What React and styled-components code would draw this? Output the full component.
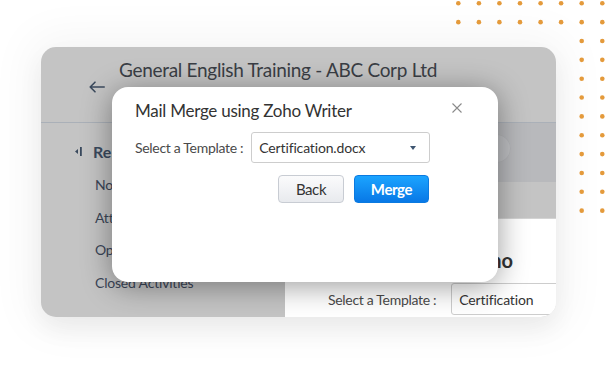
import React from 'react';
import styled, { createGlobalStyle } from 'styled-components';

const GlobalStyle = createGlobalStyle`
  html, body {
    margin: 0;
    padding: 0;
    background: #ffffff;
  }
  body {
    font-family: Lato, "Open Sans", "Liberation Sans", sans-serif;
  }
`;

const Stage = styled.div`
  position: relative;
  box-sizing: border-box;
  width: 606px;
  height: 369px;
  overflow: hidden;
  padding: 47px 0 0 41px;
  background: #ffffff;
`;

const Dots = styled.svg`
  position: absolute;
  top: 0;
  left: 456px;
`;

const Card = styled.div`
  position: relative;
  display: flex;
  flex-direction: column;
  width: 515px;
  height: 270px;
  border-radius: 15px;
  overflow: hidden;
  background: #c4c4c4;
  box-shadow:
    0 12px 24px rgba(0, 0, 0, 0.06),
    0 0 44px 14px rgba(0, 0, 0, 0.04);
`;

const Header = styled.div`
  display: flex;
  align-items: flex-start;
  gap: 14px;
  box-sizing: border-box;
  height: 76px;
  padding: 12px 0 0 48px;
  border-bottom: 1px solid #aab0b8;
`;

const BackArrow = styled.svg`
  margin-top: 22px;
  flex-shrink: 0;
`;

const PageTitle = styled.div`
  font-size: 19px;
  line-height: 22px;
  letter-spacing: -0.3px;
  color: #3a3e45;
`;

const Body = styled.div`
  display: flex;
  flex: 1;
  min-height: 0;
`;

const Sidebar = styled.div`
  display: flex;
  flex-direction: column;
  width: 244px;
  flex-shrink: 0;
  padding: 11px 0 0 34px;
  box-sizing: border-box;
`;

const SideHead = styled.div`
  display: flex;
  align-items: center;
  gap: 11px;
  height: 35px;
  font-size: 16px;
  font-weight: 700;
  color: #3a4a5e;
`;

const SideItem = styled.div`
  height: 32.5px;
  line-height: 32.5px;
  padding-left: 20px;
  font-size: 14px;
  letter-spacing: -0.2px;
  color: #3b4658;
  white-space: nowrap;
`;

const Main = styled.div`
  display: flex;
  flex-direction: column;
  flex: 1;
  min-width: 0;
`;

const Band = styled.div`
  display: flex;
  box-sizing: border-box;
  height: ${props => props.height}px;
  background: ${props => props.bg};
  padding-top: ${props => props.pad || 0}px;
`;

const Pill = styled.div`
  width: 220px;
  height: 29px;
  margin-left: auto;
  margin-right: 45px;
  border-radius: 15px;
  background: #bfc0c3;
  box-shadow: inset 0 0 0 1px #b4b5b8;
`;

const Panel = styled.div`
  flex: 1;
  background: #ffffff;
  border-top: 1px solid #d4d4d4;
  overflow: hidden;
`;

const PanelTitle = styled.div`
  margin-top: 29px;
  padding-right: 43px;
  text-align: right;
  font-size: 20px;
  line-height: 24px;
  font-weight: 700;
  color: #333333;
  white-space: nowrap;
`;

const PanelRow = styled.div`
  display: flex;
  align-items: center;
  gap: 15px;
  margin-top: 11px;
  padding-left: 43px;
`;

const Label = styled.span`
  font-size: 14px;
  letter-spacing: -0.3px;
  color: #4a4a4a;
  white-space: nowrap;
`;

const FieldBox = styled.div`
  display: flex;
  align-items: center;
  box-sizing: border-box;
  flex-shrink: 0;
  width: ${props => props.width}px;
  height: ${props => props.height}px;
  padding: 0 ${props => props.padRight || 7}px 0 7px;
  border: 1px solid #cdcdcd;
  border-radius: 3px;
  background: #ffffff;
  font-size: 14px;
  letter-spacing: -0.15px;
  color: #333333;
`;

const FieldText = styled.span`
  flex: 1;
  white-space: nowrap;
`;

const Dialog = styled.div`
  position: absolute;
  left: 71px;
  top: 40px;
  box-sizing: border-box;
  width: 386px;
  height: 195px;
  padding: 12px 69px 0 23px;
  border-radius: 16px;
  background: #ffffff;
  box-shadow: 0 4px 30px rgba(0, 0, 0, 0.4);
`;

const DialogHead = styled.div`
  display: flex;
  align-items: flex-start;
  justify-content: space-between;
  margin-right: -33px;
`;

const DialogTitle = styled.div`
  font-size: 17px;
  line-height: 24px;
  letter-spacing: -0.25px;
  color: #333333;
`;

const CloseButton = styled.svg`
  margin-top: 4px;
  cursor: pointer;
`;

const FormRow = styled.div`
  display: flex;
  align-items: center;
  gap: 8px;
  margin-top: 9px;
`;

const Actions = styled.div`
  display: flex;
  justify-content: flex-end;
  gap: 10px;
  margin-top: 12px;
`;

const Button = styled.button`
  box-sizing: border-box;
  height: 28px;
  width: ${props => props.width}px;
  padding: 0;
  border-radius: 4px;
  font-family: inherit;
  font-size: 15px;
  letter-spacing: -0.4px;
  font-weight: ${props => (props.primary ? 700 : 400)};
  color: ${props => (props.primary ? '#ffffff' : '#333333')};
  border: 1px solid ${props => (props.primary ? '#0b7ae0' : '#c8ccd3')};
  background: ${props =>
    props.primary
      ? 'linear-gradient(#1ba4ff, #0878e6)'
      : 'linear-gradient(#fbfbfc, #e8eaee)'};
`;

const dotsX = [2.3, 22.9, 43.4, 64, 84.6, 105.1, 125.7, 146.3];

const DotGrid = () => {
  const dots = [];
  for (let row = 0; row < 12; row++) {
    const cols = row < 2 ? dotsX : dotsX.slice(6);
    cols.forEach(x => {
      dots.push(<circle key={`${row}-${x}`} cx={x} cy={3.3 + row * 18.85} r="2.3" />);
    });
  }
  return (
    <Dots width="150" height="216" viewBox="0 0 150 216" fill="#e49a3b">
      {dots}
    </Dots>
  );
};

export default function App() {
  return (
    <Stage>
      <GlobalStyle />
      <Card>
        <Header>
          <BackArrow width="16" height="12" viewBox="0 0 16 12" fill="none" stroke="#3b4a5d" strokeWidth="1.6" strokeLinecap="round" strokeLinejoin="round">
            <path d="M15.2 6H1.2M6 1.2L1.2 6L6 10.8" />
          </BackArrow>
          <PageTitle>General English Training - ABC Corp Ltd</PageTitle>
        </Header>
        <Body>
          <Sidebar>
            <SideHead>
              <svg width="7" height="9" viewBox="0 0 7 9" fill="#3a4a5e">
                <path d="M0 4.5L3 2V7Z" />
                <rect x="5" y="0" width="1.8" height="9" />
              </svg>
              Re
            </SideHead>
            <SideItem>No</SideItem>
            <SideItem>Att</SideItem>
            <SideItem>Op</SideItem>
            <SideItem>Closed Activities</SideItem>
          </Sidebar>
          <Main>
            <Band height={59} bg="#b8b9bc" pad={11}>
              <Pill />
            </Band>
            <Band height={36} bg="#c4c4c4" />
            <Panel>
              <PanelTitle>Mail Merge using Zoho</PanelTitle>
              <PanelRow>
                <Label>Select a Template :</Label>
                <FieldBox width={160} height={32}>
                  <FieldText>Certification</FieldText>
                </FieldBox>
              </PanelRow>
            </Panel>
          </Main>
        </Body>
        <Dialog>
          <DialogHead>
            <DialogTitle>Mail Merge using Zoho Writer</DialogTitle>
            <CloseButton width="10" height="10" viewBox="0 0 10 10" stroke="#8a8a8a" strokeWidth="1.1">
              <path d="M0.5 0.5L9.5 9.5M9.5 0.5L0.5 9.5" />
            </CloseButton>
          </DialogHead>
          <FormRow>
            <Label>Select a Template :</Label>
            <FieldBox width={179} height={31} padRight={13}>
              <FieldText>Certification.docx</FieldText>
              <svg width="6" height="4" viewBox="0 0 6 4" fill="#3e5571">
                <path d="M0 0H6L3 4Z" />
              </svg>
            </FieldBox>
          </FormRow>
          <Actions>
            <Button width={66}>Back</Button>
            <Button width={75} primary>Merge</Button>
          </Actions>
        </Dialog>
      </Card>
      <DotGrid />
    </Stage>
  );
}
